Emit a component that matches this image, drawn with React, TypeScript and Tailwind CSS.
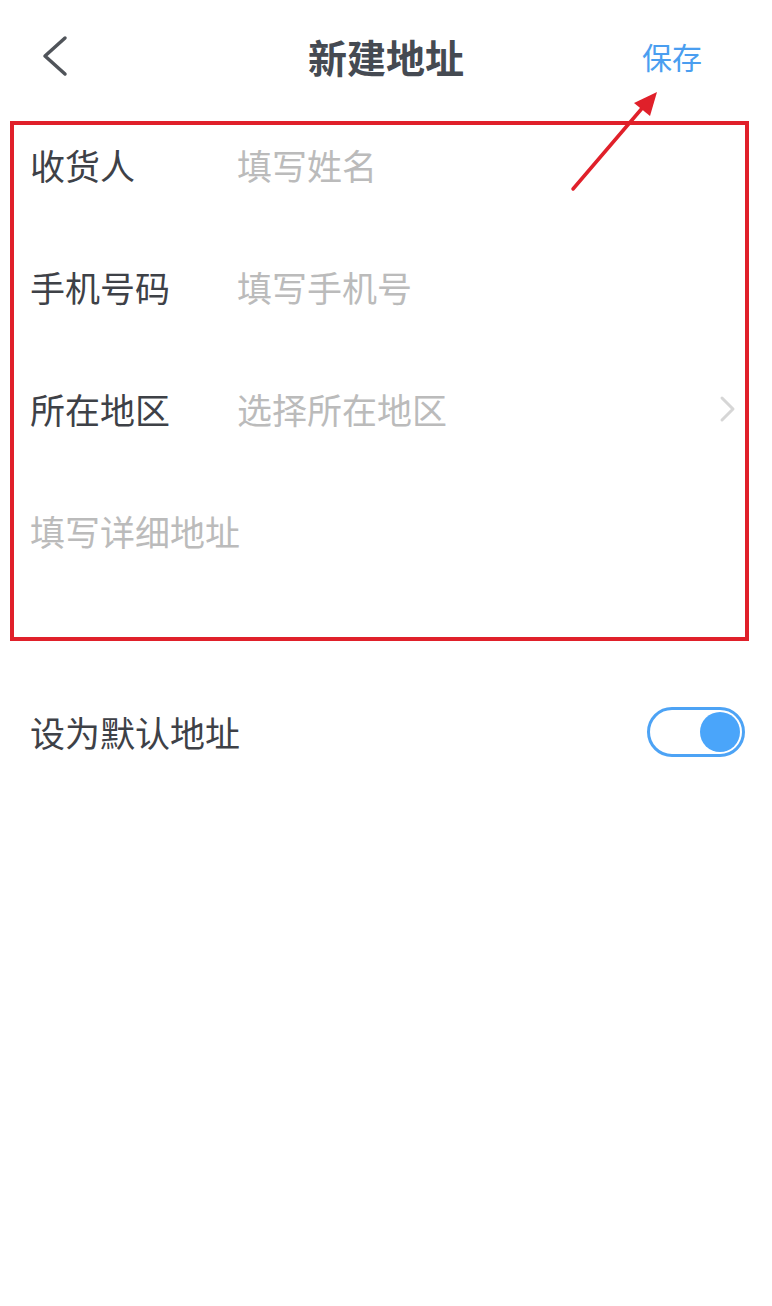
import React from "react";

const FONT = "font-['Noto_Sans_CJK_SC','Noto_Sans',sans-serif]";

type Field = { label: string; placeholder: string; chevron?: boolean };

const fields: Field[] = [
  { label: "收货人", placeholder: "填写姓名" },
  { label: "手机号码", placeholder: "填写手机号" },
  { label: "所在地区", placeholder: "选择所在地区", chevron: true },
];

function BackIcon() {
  return (
    <svg width="30" height="42" viewBox="0 0 30 42" fill="none">
      <polyline
        points="25,3 5,21 25,39"
        stroke="#50545a"
        strokeWidth="3.5"
        strokeLinecap="round"
        strokeLinejoin="round"
      />
    </svg>
  );
}

function ChevronRight() {
  return (
    <svg width="18" height="28" viewBox="0 0 18 28" fill="none">
      <polyline
        points="3,3 14,14 3,25"
        stroke="#d6d6d6"
        strokeWidth="3"
        strokeLinecap="round"
        strokeLinejoin="round"
      />
    </svg>
  );
}

export default function App() {
  return (
    <div className={`relative h-[1306px] w-[772px] bg-white ${FONT}`}>
      {/* header */}
      <div className="grid h-[112px] grid-cols-[1fr_auto_1fr] items-center px-[40px]">
        <BackIcon />
        <h1 className="text-[39px] font-bold text-[#454a52]">新建地址</h1>
        <span className="mr-[30px] justify-self-end text-[30px] text-[#4a9ef0]">保存</span>
      </div>

      {/* annotated form */}
      <div className="ml-[10px] mt-[9px] w-[739px] border-[4px] border-[#e0202a] pb-[66px]">
        <div className="flex flex-col gap-[42px]">
          {fields.map((f) => (
            <div key={f.label} className="flex h-[80px] items-center pl-[16px] pr-[8px] text-[35px]">
              <span className="w-[207px] text-[#3e4147]">{f.label}</span>
              <span className="flex-1 text-[#bbbbbb]">{f.placeholder}</span>
              {f.chevron && <ChevronRight />}
            </div>
          ))}
          <div className="flex h-[80px] items-center pl-[16px] text-[35px] text-[#bbbbbb]">
            填写详细地址
          </div>
        </div>
      </div>

      {/* default toggle */}
      <div className="mt-[66px] flex h-[50px] items-center justify-between pl-[30px] pr-[27px]">
        <span className="text-[35px] text-[#3e4147]">设为默认地址</span>
        <div className="flex h-[50px] w-[98px] items-center justify-end rounded-full border-[3px] border-[#4da3f5] pr-[2px]">
          <div className="h-[40px] w-[40px] rounded-full bg-[#4aa5fa]" />
        </div>
      </div>

      {/* annotation arrow */}
      <svg className="absolute left-0 top-0" width="772" height="240" viewBox="0 0 772 240" fill="none">
        <line x1="573" y1="189" x2="644" y2="106" stroke="#e0202a" strokeWidth="3.5" strokeLinecap="round" />
        <polygon points="657,92 634,103 650,116" fill="#e0202a" />
      </svg>
    </div>
  );
}
